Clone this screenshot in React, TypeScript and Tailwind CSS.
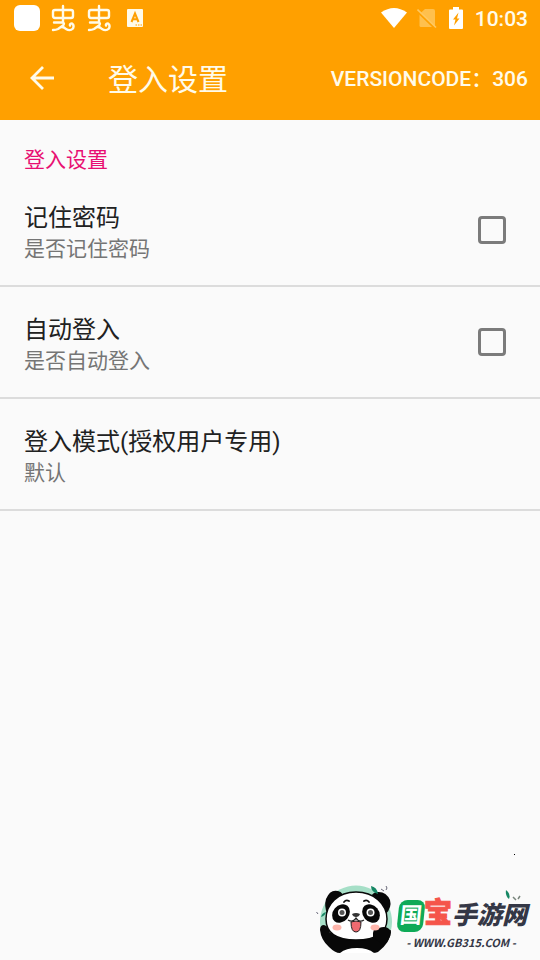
import { useState } from 'react';

function BugIcon() {
  return (
    <svg viewBox="0 0 24 28" className="h-7 w-6" fill="none" stroke="#fffbea" strokeWidth="2.4" strokeLinecap="round" strokeLinejoin="round" aria-hidden="true">
      <path d="M12 2V18" />
      <path d="M4 6H20Q22 6 22 8V12Q22 14 20 14H4Q2 14 2 12V8Q2 6 4 6Z" />
      <path d="M3 18.500H11.500Q14 19 12 21.500L7 25Q5 26 2 26M9 23.500Q12 22 15 25Q19 27.500 22 24.500Q23.500 21 21 19.500Q18.500 19.500 19 21.500" />
    </svg>
  );
}

function StatusBar() {
  return (
    <div className="flex h-9 items-center justify-between pr-3 pl-3.5">
      <div className="flex items-center gap-3">
        <span className="size-[26px] rounded-md bg-white" />
        <span className="-ml-px flex items-center gap-3">
          <BugIcon />
          <BugIcon />
        </span>
        <svg viewBox="0 0 16 18" className="ml-1 h-[18px] w-4" aria-hidden="true">
          <rect width="16" height="18" rx="1" fill="#fffbea" />
          <path d="M4.500 13L8 4.500L11.500 13M5.800 10.300H10.200" fill="none" stroke="#ffa000" strokeWidth="2" />
          <path d="M8.500 16H10M11 16H12.500M13.500 16H15" stroke="#ffa000" strokeWidth="1.200" />
        </svg>
      </div>
      <div className="flex items-center">
        <svg viewBox="0 0 26 20" className="h-5 w-[26px]" aria-hidden="true">
          <path d="M0 4.500Q13 -4.500 26 4.500L13 20Z" fill="#fff" />
        </svg>
        <svg viewBox="0 0 20 22" className="ml-2.5 h-[22px] w-5" aria-hidden="true">
          <path d="M8 2H16Q18 2 18 4V20H4Q2.500 20 2.500 18.500V7Z" fill="#ffc04d" />
          <path d="M0.500 4.500L18 21.500" stroke="#ffa000" strokeWidth="2" />
          <path d="M0.500 2.500L19 20.500" stroke="#ffc860" strokeWidth="1.600" />
        </svg>
        <svg viewBox="0 0 14 22" className="ml-3 h-[22px] w-3.5" aria-hidden="true">
          <path d="M4 0H10V2.500H13Q14 2.500 14 3.500V21Q14 22 13 22H1Q0 22 0 21V3.500Q0 2.500 1 2.500H4Z" fill="#fff" />
          <path d="M9.500 5.500L4 12.500H6.500L5 18.500L10.500 11.500H8Z" fill="#ffa000" />
        </svg>
        <span className="ml-3 pt-0.5 text-[21px] leading-6 font-medium text-[#fffbea]">10:03</span>
      </div>
    </div>
  );
}

function Toolbar() {
  return (
    <header className="flex h-[84px] items-center pr-3 pl-[30px] text-[#fffbea]">
      <button type="button" aria-label="返回">
        <svg viewBox="0 0 24 24" className="size-6" fill="none" stroke="currentColor" strokeWidth="2.800" aria-hidden="true">
          <path d="M24 12H2M13 1L2 12L13 23" />
        </svg>
      </button>
      <h1 className="ml-[54px] pt-1 text-[30px] leading-9 font-normal">登入设置</h1>
      <button type="button" className="ml-auto pt-0.5 text-[21px] leading-6 font-medium">VERSIONCODE：306</button>
    </header>
  );
}

type PreferenceProps = {
  title: string;
  summary: string;
  checked?: boolean;
  onChange?: (value: boolean) => void;
};

function PreferenceText({ title, summary }: PreferenceProps) {
  return (
    <span className="block pt-1.5 text-left">
      <span className="block text-2xl text-[#212121]">{title}</span>
      <span className="block text-[21px] leading-[30px] text-[#757575]">{summary}</span>
    </span>
  );
}

const rowClass = 'flex h-28 w-full items-center justify-between border-b-2 border-[#dcdcdc] pr-[34px] pl-6';

function CheckPreference(props: PreferenceProps) {
  return (
    <label className={rowClass}>
      <PreferenceText {...props} />
      <input
        type="checkbox"
        checked={props.checked}
        onChange={(e) => props.onChange?.(e.target.checked)}
        className="size-7 appearance-none rounded-sm border-3 border-[#7b7b7b] checked:bg-[#e80f72]"
      />
    </label>
  );
}

function PandaLogo() {
  return (
    <svg viewBox="6 7 80 76" className="h-[76px] w-20" aria-hidden="true">
      <path d="M11 55A36 36 0 1 1 81 55Z" fill="#a6dfc7" />
      {/* body and arms */}
      <path d="M10 55Q10 50 14 50Q19 51 20 58H72L81 55Q81 67 68 77Q66 78 62 78H30Q25 78 19 72Q11 65 10 55Z" fill="#080808" />
      <path d="M30 78Q36 73 47 73Q58 73 64 78Z" fill="#fff" />
      {/* ears */}
      <path d="M17 38Q14 31 16 24Q20 14 28 16Q34 17 33 25Z" fill="#080808" />
      <path d="M76 39Q82 32 80 25Q76 16 67 17Q60 18 61 26Z" fill="#080808" />
      {/* face */}
      <path d="M46 17C64 17 77 29 77 44C77 59 64 65 46 65C28 65 16 59 16 44C16 29 28 17 46 17Z" fill="#fff" stroke="#080808" strokeWidth="1.500" />
      <path d="M63 62Q62 52 69 53Q78 50 81 57Q80 66 73 70Z" fill="#080808" />
      <ellipse cx="31" cy="38.500" rx="8" ry="10" transform="rotate(40 31 38.500)" fill="#080808" />
      <ellipse cx="61" cy="38.500" rx="8" ry="10" transform="rotate(-40 61 38.500)" fill="#080808" />
      <circle cx="32" cy="37.500" r="4" fill="#fff" />
      <circle cx="60.500" cy="37.500" r="4" fill="#fff" />
      <circle cx="32" cy="37.500" r="2.500" fill="#555" />
      <circle cx="60.500" cy="37.500" r="2.500" fill="#555" />
      <path d="M34 27Q36 24.500 39 26M54 26Q57 24.500 59 27" fill="none" stroke="#111" strokeWidth="1.800" strokeLinecap="round" />
      <path d="M42 39Q46 37 50 39Q49 42 46 42Q43 42 42 39Z" fill="#333" />
      <path d="M38 45Q43 48 46 43Q49 48 54 45" fill="none" stroke="#222" strokeWidth="1.300" />
      <path d="M41 47Q46 45 51 47Q51 57 46 57Q41 57 41 47Z" fill="#ee6a70" stroke="#222" strokeWidth="1" />
      <ellipse cx="27" cy="52.500" rx="4.500" ry="3" fill="#ffb5ab" />
      <ellipse cx="65" cy="52.500" rx="4.500" ry="3" fill="#ffb5ab" />
      <path d="M61 11Q67 12 68 19Q61 17 61 11ZM11 42Q12 38 16 37Q15 41 11 42Z" fill="#168764" />
      <path d="M71 14L74 16M76 15Q78 13 76 11M8 39L6.500 37" fill="none" stroke="#667" strokeWidth="1" />
    </svg>
  );
}

function SiteMark() {
  return (
    <footer className="relative mt-auto flex items-end justify-end pr-2.5 pb-0.5">
      <span className="absolute -top-7 right-[25px] size-px bg-black" />
      <PandaLogo />
      <div className="relative h-[72px] w-[134px]">
        <div className="flex h-[46px] items-end pl-0.5 font-black whitespace-nowrap">
          <span className="flex h-8 w-[26px] -skew-x-6 items-center justify-center rounded-lg bg-[#0eaa57] text-[22px] leading-8 font-bold text-white">国</span>
          <span className="text-[28px] leading-9 text-[#f5554a] [-webkit-text-stroke:1px_#f5554a]">宝</span>
          <span className="text-[25px] leading-8 text-[#343746] italic">手游网</span>
        </div>
        <p className="pr-1 text-center font-['Noto_Sans_CJK_SC',sans-serif] text-[11px] leading-5 font-bold text-[#343746] italic">- WWW.GB315.COM -</p>
        <svg viewBox="0 0 20 16" className="absolute top-1 right-1.5 h-4 w-5" aria-hidden="true">
          <path d="M2 0Q7 4 5 9Q1 6 2 0Z" fill="#168764" />
          <path d="M9 7L12 10M14 9L16 6" stroke="#78857c" strokeWidth="1.500" />
        </svg>
      </div>
    </footer>
  );
}

export default function App() {
  const [remember, setRemember] = useState(false);
  const [autoLogin, setAutoLogin] = useState(false);

  return (
    <div className="flex min-h-screen flex-col bg-[#fafafa] font-[Roboto,'Noto_Sans_CJK_SC',sans-serif]">
      <div className="bg-[#ffa000]">
        <StatusBar />
        <Toolbar />
      </div>
      <main>
        <h2 className="px-6 pt-[25px] text-[21px] leading-[30px] font-normal text-[#e80f72]">登入设置</h2>
        <CheckPreference title="记住密码" summary="是否记住密码" checked={remember} onChange={setRemember} />
        <CheckPreference title="自动登入" summary="是否自动登入" checked={autoLogin} onChange={setAutoLogin} />
        <button type="button" className={rowClass}>
          <PreferenceText title="登入模式(授权用户专用)" summary="默认" />
        </button>
      </main>
      <SiteMark />
    </div>
  );
}
